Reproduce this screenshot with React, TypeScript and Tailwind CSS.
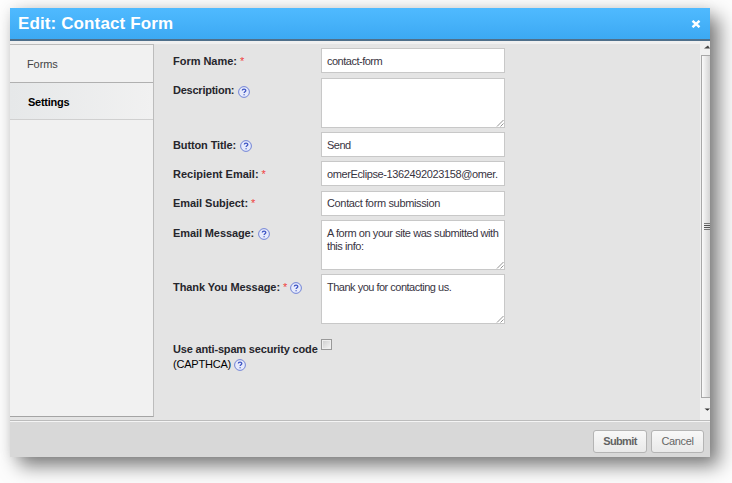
import { useState } from "react";
import clsx from "clsx";

type Field = {
  name: string;
  label: string;
  value: string;
  required?: boolean;
  help?: boolean;
  multiline?: boolean;
  labelClass?: string;
  valueClass?: string;
};

const fields: Field[] = [
  { name: "formName", label: "Form Name:", value: "contact-form", required: true, labelClass: "tracking-[-0.03px]" },
  { name: "description", label: "Description:", value: "", help: true, multiline: true, labelClass: "tracking-[-0.24px]" },
  { name: "buttonTitle", label: "Button Title:", value: "Send", help: true, labelClass: "tracking-[-0.12px]" },
  {
    name: "recipient",
    label: "Recipient Email:",
    value: "omerEclipse-1362492023158@omer.",
    required: true,
    valueClass: "tracking-[-0.38px]",
  },
  {
    name: "subject",
    label: "Email Subject:",
    value: "Contact form submission",
    required: true,
    labelClass: "tracking-[-0.05px]",
    valueClass: "tracking-[-0.35px]",
  },
  {
    name: "message",
    label: "Email Message:",
    value: "A form on your site was submitted with\nthis info:",
    help: true,
    multiline: true,
    labelClass: "tracking-[-0.1px]",
    valueClass: "tracking-[-0.43px]",
  },
  {
    name: "thanks",
    label: "Thank You Message:",
    value: "Thank you for contacting us.",
    required: true,
    help: true,
    multiline: true,
    labelClass: "tracking-[-0.08px]",
  },
];

const HelpIcon = ({ className }: { className?: string }) => (
  <svg viewBox="0 0 12 12" className={clsx("inline-block size-3 shrink-0", className)}>
    <circle cx="6" cy="6" r="5.4" fill="#e6eafb" stroke="#6478d4" strokeWidth="0.9" />
    <path
      d="M4.3 4.6C4.3 2.6 7.8 2.6 7.8 4.5C7.8 5.8 6.1 5.7 6.1 7.1M6.1 8.2V9.3"
      fill="none"
      stroke="#3f55c4"
      strokeWidth="1.3"
    />
  </svg>
);

const Grip = () => (
  <svg viewBox="0 0 8 8" className="pointer-events-none absolute right-px bottom-px size-2">
    <path d="M1 7.5L7.5 1M4.5 7.5L7.5 4.5" stroke="#777" strokeWidth="0.8" />
  </svg>
);

const FormRow = ({ field }: { field: Field }) => {
  const [value, setValue] = useState(field.value);
  const box = "block w-full resize-none overflow-hidden border border-[#c8c8c8] bg-white pl-[5px] text-[11px] text-[#38343f] outline-none";
  const tracking = field.valueClass ?? "tracking-[-0.5px]";

  return (
    <div className="flex">
      <div className="-mb-px flex h-[26px] w-[148px] shrink-0 items-center font-bold">
        <span className={field.labelClass}>{field.label}</span>
        {field.required && <span className="ml-[3px] font-normal text-[#f04040]">*</span>}
        {field.help && <HelpIcon className={clsx("relative top-px", field.required ? "ml-[3px]" : "ml-1")} />}
      </div>
      <div className="relative w-[184px]">
        {field.multiline ? (
          <>
            <textarea
              className={clsx(box, "h-[50px] pt-[6px] leading-[13px] whitespace-pre", tracking)}
              value={value}
              onChange={(e) => setValue(e.target.value)}
            />
            <Grip />
          </>
        ) : (
          <input
            className={clsx(box, "h-[25px]", tracking)}
            value={value}
            onChange={(e) => setValue(e.target.value)}
          />
        )}
      </div>
    </div>
  );
};

const Scrollbar = () => (
  <div className="flex w-[10px] shrink-0 flex-col items-end bg-[#f0f0f0]">
    <div className="flex h-[11px] w-full items-start justify-end pt-px">
      <svg viewBox="0 0 6 4" className="h-1 w-[6px]">
        <path d="M0 3.5L4 0.5L6 3.5Z" fill="#444" />
      </svg>
    </div>
    <div className="flex w-[9px] flex-1 items-center justify-end border border-r-0 border-[#a8a8a8] bg-linear-to-r from-[#fafafa] to-[#d4d4d4]">
      <div className="flex w-[6px] flex-col gap-px">
        <div className="h-px bg-[#777]" />
        <div className="h-px bg-[#555]" />
        <div className="h-px bg-[#555]" />
        <div className="h-px bg-[#777]" />
      </div>
    </div>
    <div className="flex h-[22px] w-full items-center justify-end">
      <svg viewBox="0 0 6 3" className="h-[3px] w-[6px]">
        <path d="M0.5 0.5H6L3.5 2.8Z" fill="#333" />
      </svg>
    </div>
  </div>
);

const App = () => {
  const [captcha, setCaptcha] = useState(false);

  return (
    <div className="h-[483px] w-[732px] overflow-hidden bg-[#fdfdfd] pt-2 pl-[10px] font-['Liberation_Sans',Arial,sans-serif] text-[11px] text-[#26262c]">
      <div className="flex h-[449px] w-[700px] flex-col bg-[#e4e4e4] shadow-[9px_9px_18px_0px_rgba(0,0,0,0.5),0_0_12px_rgba(0,0,0,0.08)]">
        {/* Title bar */}
        <div className="flex h-[33px] shrink-0 items-center justify-between border-b-2 border-[#4f6f8a] bg-linear-to-b from-[#4fbaff] to-[#3ca9f3] pr-[9px] pl-2 text-white">
          <h1 className="-mt-px text-[17px] leading-none font-bold tracking-[0.12px]">Edit: Contact Form</h1>
          <svg viewBox="0 0 10 8" className="h-2 w-[10px]">
            <path d="M1.5 0.8L8.5 7.2M8.5 0.8L1.5 7.2" stroke="white" strokeWidth="2.4" />
          </svg>
        </div>

        <div className="flex min-h-0 flex-1 border-t-[3px] border-[#f0f0f0]">
          {/* Side tabs */}
          <div className="h-[373px] w-36 shrink-0 border-t border-r border-b border-t-[#bbb] border-r-[#bcbcbc] border-b-[#a4a4a4] bg-[#f1f1f1]">
            <div className="flex h-[38px] items-center border-b border-[#b0b0b0] pt-[2px] pl-[17px] tracking-[-0.1px] text-[#444]">
              Forms
            </div>
            <div className="flex h-[37px] items-center border-b border-[#d0d0d0] bg-linear-to-r from-[#e6e8e9] to-[#f1f1f1] pt-[2px] pl-[18px] font-bold tracking-[-0.25px] text-black">
              Settings
            </div>
          </div>

          {/* Form */}
          <div className="flex flex-1 flex-col pt-[4.4px] pl-[19px]">
            <div className="flex flex-col gap-y-[4.33px]">
              {fields.map((field) => (
                <FormRow key={field.name} field={field} />
              ))}
            </div>
            <div className="mt-[14.6px] flex">
              <div className="w-[148px] shrink-0 pt-[3px] leading-[15px] font-bold whitespace-nowrap">
                <div className="tracking-[-0.17px]">Use anti-spam security code</div>
                <div className="flex items-center">
                  <span className="font-normal tracking-[-0.2px] text-black">(CAPTHCA)</span>
                  <HelpIcon className="relative top-px ml-[3px]" />
                </div>
              </div>
              <input
                type="checkbox"
                checked={captcha}
                onChange={(e) => setCaptcha(e.target.checked)}
                className="size-[11px] appearance-none border border-[#999] bg-linear-to-br from-[#ccc] to-[#f6f6f6] shadow-[inset_0_0_0_1px_#eee] checked:bg-[#777]"
              />
            </div>
          </div>

          <Scrollbar />
        </div>

        {/* Footer */}
        <div className="flex h-[37px] shrink-0 items-start justify-end gap-1 border-t border-[#bcbcbc] bg-[#d8d8d8] pt-[9px] pr-[6px] shadow-[inset_0_1px_0_#f4f4f4]">
          <button className="h-[23px] w-[54px] rounded-[3px] border border-[#b4b4b4] bg-linear-to-b from-[#f8f8f8] to-[#e9e9e9] font-bold tracking-[-0.65px] text-[#636363]">
            Submit
          </button>
          <button className="h-[23px] w-[53px] rounded-[3px] border border-[#b4b4b4] bg-linear-to-b from-[#f8f8f8] to-[#e9e9e9] tracking-[-0.4px] text-[#666]">
            Cancel
          </button>
        </div>
      </div>
    </div>
  );
};

export default App;
